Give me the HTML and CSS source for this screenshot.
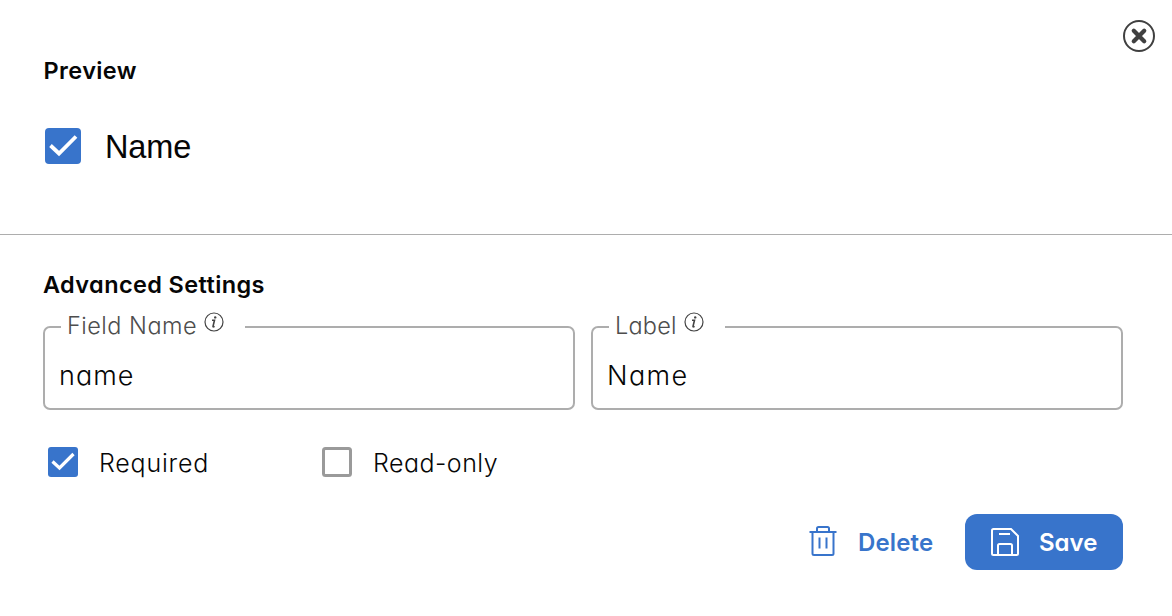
FILE: index.html
```html
<!DOCTYPE html>
<html lang="en">
<head>
<meta charset="utf-8">
<title>Field settings</title>
<link rel="stylesheet" href="styles.css">
</head>
<body>
<main class="dialog">
  <section class="preview">
    <h2 class="title preview-title"><span>Preview</span></h2>
    <label class="preview-field">
      <svg class="check-large" viewBox="0 0 36 36"><rect width="36" height="36" rx="4" fill="#3874cb"/><path d="M5.500 17.500 14 25.500 31 8.500" fill="none" stroke="#fff" stroke-width="3.800"/></svg>
      <span class="preview-name">Name</span>
    </label>
    <button class="close" aria-label="Close"><svg viewBox="0 0 34 34"><circle cx="17" cy="17" r="15" fill="none" stroke="#404040" stroke-width="2"/><path d="m11.800 11.800 10.400 10.400M22.200 11.800 11.800 22.200" stroke="#404040" stroke-width="4.300" stroke-linecap="round"/></svg></button>
  </section>
  <section class="settings">
    <h2 class="title settings-title"><span>Advanced Settings</span></h2>
    <div class="fields">
      <fieldset class="field">
        <legend class="legend legend-name"><span class="legend-text t-field">Field Name</span><svg class="info" viewBox="0 0 20 20"><circle cx="10" cy="10" r="9" fill="none" stroke="#444" stroke-width="1.200"/><path d="M8 8.200h2.500L9 14.300q-.1 1 1.600.1" fill="none" stroke="#444" stroke-width="1.600"/><circle cx="11.200" cy="5.400" r="1.200" fill="#444"/></svg></legend>
        <div class="value v-lower">name</div>
      </fieldset>
      <fieldset class="field">
        <legend class="legend legend-label"><span class="legend-text t-label">Label</span><svg class="info" viewBox="0 0 20 20"><circle cx="10" cy="10" r="9" fill="none" stroke="#444" stroke-width="1.200"/><path d="M8 8.200h2.500L9 14.300q-.1 1 1.600.1" fill="none" stroke="#444" stroke-width="1.600"/><circle cx="11.200" cy="5.400" r="1.200" fill="#444"/></svg></legend>
        <div class="value v-upper">Name</div>
      </fieldset>
    </div>
    <div class="options">
      <label class="option option-required">
        <svg class="check" viewBox="0 0 30 30"><rect width="30" height="30" rx="3" fill="#3874cb"/><path d="M4.500 14.500 11.500 21 25.500 7" fill="none" stroke="#fff" stroke-width="3.200"/></svg>
        <span class="t-required">Required</span>
      </label>
      <label class="option">
        <svg class="check" viewBox="0 0 30 30"><rect x="1.500" y="1.500" width="27" height="27" rx="2" fill="#fff" stroke="#9a9a9a" stroke-width="3"/></svg>
        <span class="t-readonly">Read-only</span>
      </label>
    </div>
    <div class="actions">
      <button class="button delete">
        <svg class="trash" viewBox="0 0 28 30" fill="none" stroke="#3874cb" stroke-width="2"><path d="M.5 6h27M8 6V2.500Q8 1 9.500 1h9Q20 1 20 2.500V6M3.500 6v21.500q0 1.500 1.500 1.500h18q1.500 0 1.500-1.500V6M10.500 11.500v11M17.500 11.500v11"/></svg>
        <span class="t-delete">Delete</span>
      </button>
      <button class="button save">
        <svg class="disk" viewBox="0 0 28 28" fill="none" stroke="#fff" stroke-width="2"><path d="M2.500 1H20l7 7v17.500q0 1.500-1.500 1.500h-23Q1 27 1 25.500v-23Q1 1 2.500 1ZM7 27V17.500Q7 16 8.500 16h11q1.500 0 1.500 1.500V27M8 6h11"/></svg>
        <span class="t-save">Save</span>
      </button>
    </div>
  </section>
</main>
</body>
</html>
```
FILE: styles.css
```css
* { box-sizing: border-box; }
body {
  margin: 0;
  background: #fff;
  color: #060606;
  font-family: Inter, "Liberation Sans", sans-serif;
  font-feature-settings: "cv11" 1;
}
svg { display: block; flex: none; }
button { padding: 0; border: 0; background: none; font: inherit; font-feature-settings: inherit; }
.dialog { width: 1172px; height: 616px; overflow: hidden; }
.preview { position: relative; height: 235px; padding: 56px 43px 0; border-bottom: 1px solid #adadad; }
.title { margin: 0; font-size: 23.5px; line-height: 30px; font-weight: 600; }
.preview-title { letter-spacing: .4px; }
.preview-title span { margin-left: .5px; }
.preview-field { display: flex; align-items: center; gap: 24px; margin: 40px 0 0 2px; height: 40px; }
.check-large { width: 36px; height: 36px; }
.preview-name { padding-top: 1px; font: 32.5px/40px "Liberation Sans", sans-serif; letter-spacing: -.15px; }
.close { position: absolute; top: 19px; right: 16px; width: 34px; height: 34px; }
.settings { padding: 35px 49px 0 43px; }
.settings-title { letter-spacing: .38px; }
.fields { display: flex; gap: 16px; margin-top: 13px; }
.field { flex: 1; min-width: 0; height: 97px; margin: 0; padding: 0 14px; border: 2px solid #adadad; border-radius: 7px; }
.legend { display: flex; height: 28px; gap: 7px; padding: 0 0 0 6px; margin-left: 2px; color: #4d4d4d; }
.legend-name { width: 184px; }
.legend-label { width: 116px; }
.legend-text { font-size: 23.5px; line-height: 26px; font-weight: 300; }
.t-field { letter-spacing: .48px; }
.t-label { letter-spacing: .2px; }
.info { width: 20px; height: 20px; margin-top: -1px; }
.value { font-size: 27px; line-height: 36px; margin-top: 17px; font-weight: 300; }
.v-lower { letter-spacing: 1px; }
.v-upper { letter-spacing: 1.4px; }
.options { display: flex; margin: 35px 0 0 5px; }
.option { display: flex; align-items: center; gap: 21px; height: 36px; font-size: 25px; line-height: 36px; font-weight: 300; }
.option-required { width: 274px; }
.t-required { letter-spacing: .8px; }
.t-readonly { letter-spacing: .48px; }
.check { width: 30px; height: 30px; margin-top: -2px; }
.actions { display: flex; justify-content: flex-end; margin-top: 33px; }
.button { display: flex; align-items: center; height: 56px; font-size: 24px; font-weight: 600; }
.delete { width: 156px; gap: 21px; color: #3874cb; }
.t-delete { letter-spacing: .15px; }
.trash { width: 28px; height: 30px; margin-top: -2px; }
.save { width: 158px; padding-left: 26px; gap: 20px; border-radius: 12px; background: #3874cb; color: #fff; }
.disk { width: 28px; height: 28px; }
```
